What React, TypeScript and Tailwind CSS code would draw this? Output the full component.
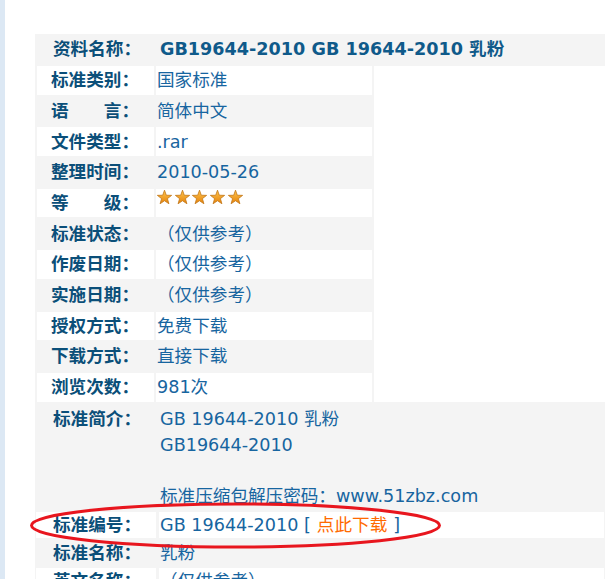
const font = "font-['DejaVu_Sans','Noto_Sans_CJK_SC',sans-serif]";

const upperRows: { label: string; value?: string; white: boolean; stars?: boolean }[] = [
  { label: "标准类别：", value: "国家标准", white: true },
  { label: "语　　言：", value: "简体中文", white: false },
  { label: "文件类型：", value: ".rar", white: true },
  { label: "整理时间：", value: "2010-05-26", white: false },
  { label: "等　　级：", white: true, stars: true },
  { label: "标准状态：", value: "（仅供参考）", white: false },
  { label: "作废日期：", value: "（仅供参考）", white: true },
  { label: "实施日期：", value: "（仅供参考）", white: false },
  { label: "授权方式：", value: "免费下载", white: true },
  { label: "下载方式：", value: "直接下载", white: false },
  { label: "浏览次数：", value: "981次", white: true },
];

function Star({ id }: { id: string }) {
  return (
    <svg width="15" height="14" viewBox="0 0 15 14.2">
      <defs>
        <linearGradient id={id} x1="0" y1="0" x2="0" y2="1">
          <stop offset="0" stopColor="#ffc64d" />
          <stop offset="1" stopColor="#e5820c" />
        </linearGradient>
      </defs>
      <polygon
        points="7.5,0.2 9.32,5.29 14.73,5.45 10.45,8.76 11.97,13.95 7.5,10.9 3.03,13.95 4.55,8.76 0.27,5.45 5.68,5.29"
        fill={`url(#${id})`}
        stroke="#c07516"
        strokeWidth="0.8"
        strokeLinejoin="round"
      />
    </svg>
  );
}

export default function App() {
  return (
    <div className={`relative flex h-[579px] overflow-hidden bg-white text-[17.6px] ${font}`}>
      <div className="w-[5px] shrink-0 bg-[#dce8f4]" />
      <div className="flex-1 pl-[30px] pt-[34px]">
        <div className="bg-[#f4f4f4]">
          {/* 资料名称 */}
          <div className="grid h-[30px] grid-cols-[120px_1fr] items-center gap-x-[3px] px-[1px]">
            <div className="pl-[17px] font-bold text-[#0b4f79]">资料名称：</div>
            <div className="whitespace-nowrap pl-[1px] font-bold text-[#0f5a8a]">
              GB19644-2010 GB 19644-2010 乳粉
            </div>
          </div>

          <div className="flex pt-[2px]">
            <div className="grid w-[339px] shrink-0 grid-cols-[117px_216px] gap-[2px] px-[2px]">
              {upperRows.map((r) => (
                <div key={r.label} className="contents">
                  <div
                    className={`flex h-[28.7px] items-center pl-[14px] font-bold text-[#0b4f79] ${
                      r.white ? "bg-white" : ""
                    }`}
                  >
                    {r.label}
                  </div>
                  <div
                    className={`flex h-[28.7px] pl-[1px] text-[#1765a0] ${r.white ? "bg-white" : ""} ${
                      r.stars ? "items-start gap-[2.7px] pt-[1px]" : "items-center"
                    }`}
                  >
                    {r.stars
                      ? [0, 1, 2, 3, 4].map((i) => <Star key={i} id={`star-${i}`} />)
                      : r.value}
                  </div>
                </div>
              ))}
            </div>
            <div className="flex-1 bg-white" />
          </div>

          <div className="grid grid-cols-[120px_1fr] gap-x-[3px] gap-y-[2px] px-[1px]">
            <div className="h-[108.8px] pl-[17px] pt-[5.5px] font-bold leading-[25.7px] text-[#0b4f79]">
              标准简介：
            </div>
            <div className="h-[108.8px] whitespace-nowrap pl-[1px] pt-[5.5px] leading-[25.7px] text-[#1765a0]">
              <div>GB 19644-2010 乳粉</div>
              <div>GB19644-2010</div>
              <div>&nbsp;</div>
              <div>标准压缩包解压密码：www.51zbz.com</div>
            </div>

            <div className="flex h-[25.5px] items-center bg-white pl-[17px] font-bold text-[#0b4f79]">
              标准编号：
            </div>
            <div className="flex h-[25.5px] items-center whitespace-nowrap bg-white pl-[1px] text-[#1765a0]">
              GB 19644-2010 [ <span className="mx-[6px] text-[#ff6a00]">点此下载</span> ]
            </div>

            <div className="flex h-[26px] items-center pl-[17px] font-bold text-[#0b4f79]">标准名称：</div>
            <div className="flex h-[26px] items-center pl-[1px] text-[#1765a0]">乳粉</div>

            <div className="flex h-[26px] items-center bg-white pl-[17px] font-bold text-[#0b4f79]">
              英文名称：
            </div>
            <div className="flex h-[26px] items-center bg-white pl-[1px] text-[#1765a0]">（仅供参考）</div>
          </div>
        </div>
      </div>

      <svg className="pointer-events-none absolute left-0 top-0" width="605" height="579">
        <ellipse cx="235.5" cy="525.5" rx="204" ry="21.5" fill="none" stroke="#e8161e" strokeWidth="3" />
      </svg>
    </div>
  );
}
